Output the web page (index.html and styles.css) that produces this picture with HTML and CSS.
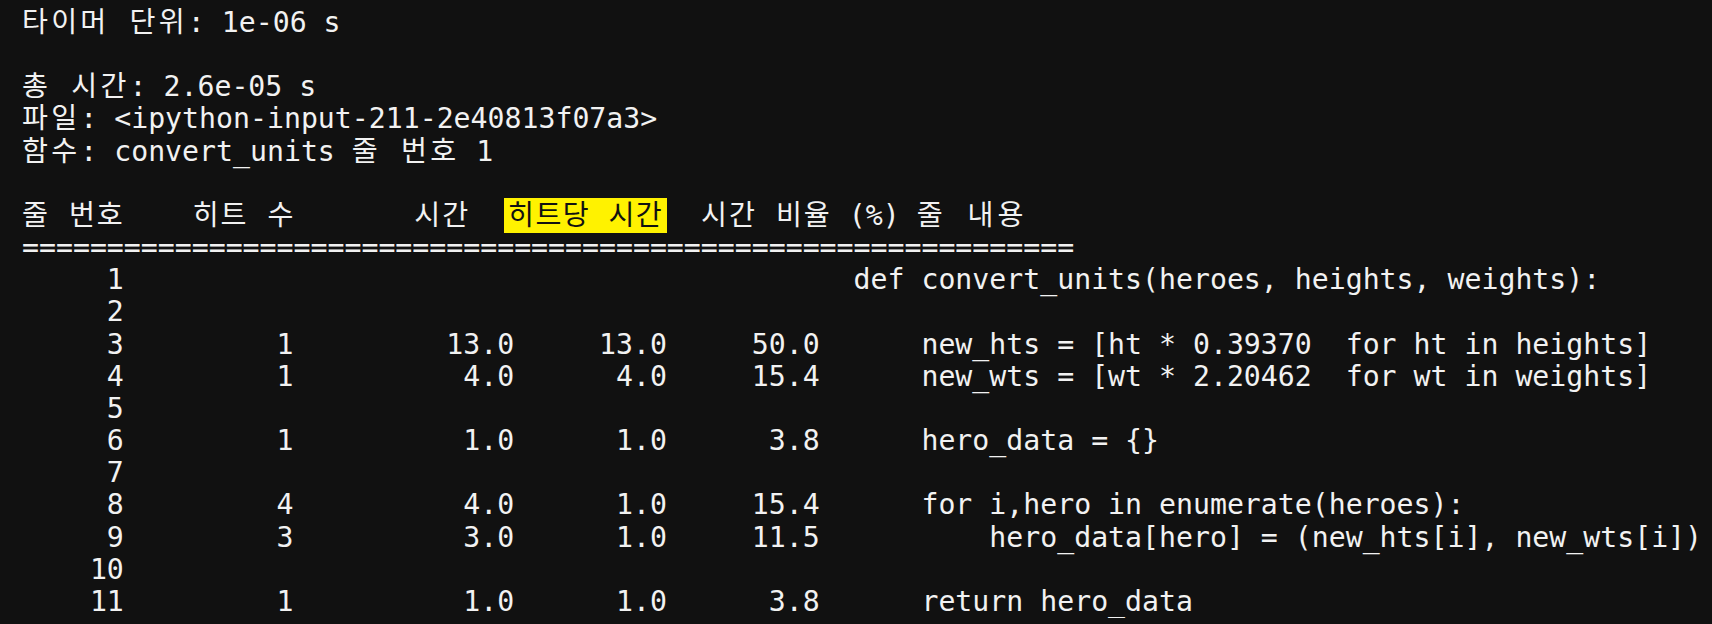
FILE: index.html
```html
<!DOCTYPE html>
<html lang="ko">
<head>
<meta charset="utf-8">
<title>line_profiler</title>
<link rel="stylesheet" href="styles.css">
</head>
<body>
<main class="terminal">
<pre class="output"><span class="ko">타이머 단위</span>: 1e-06 s

<span class="ko">총 시간</span>: 2.6e-05 s
<span class="ko">파일</span>: &lt;ipython-input-211-2e40813f07a3&gt;
<span class="ko">함수</span>: convert_units <span class="ko">줄 번호</span> 1

<span class="hdr"><span class="ko">줄 번호</span>    <span class="ko">히트 수</span>       <span class="ko">시간</span>  <mark class="hl">히트당 시간</mark>  <span class="ko">시간 비율</span> (%) <span class="ko last">줄 내용</span></span>
==============================================================
     1                                           def convert_units(heroes, heights, weights):
     2
     3         1         13.0     13.0     50.0      new_hts = [ht * 0.39370  for ht in heights]
     4         1          4.0      4.0     15.4      new_wts = [wt * 2.20462  for wt in weights]
     5
     6         1          1.0      1.0      3.8      hero_data = {}
     7
     8         4          4.0      1.0     15.4      for i,hero in enumerate(heroes):
     9         3          3.0      1.0     11.5          hero_data[hero] = (new_hts[i], new_wts[i])
    10
    11         1          1.0      1.0      3.8      return hero_data</pre>
</main>
</body>
</html>
```

FILE: styles.css
```css
html, body {
  margin: 0;
  padding: 0;
  background: #111111;
}

.terminal {
  padding: 7px 0 0 22px;
}

.output {
  margin: 0;
  font-family: "DejaVu Sans Mono", "Noto Sans CJK KR", monospace;
  font-size: 28.2px;
  line-height: 32.15px;
  color: #f2f2f2;
  white-space: pre;
}

.ko {
  letter-spacing: 3.2px;
}

.hdr .ko {
  letter-spacing: 2px;
}

.hdr .last {
  letter-spacing: 4px;
}

.hl {
  background: #fff200;
  color: #111111;
  letter-spacing: 1.4px;
  padding: 1px 4px;
}
```
